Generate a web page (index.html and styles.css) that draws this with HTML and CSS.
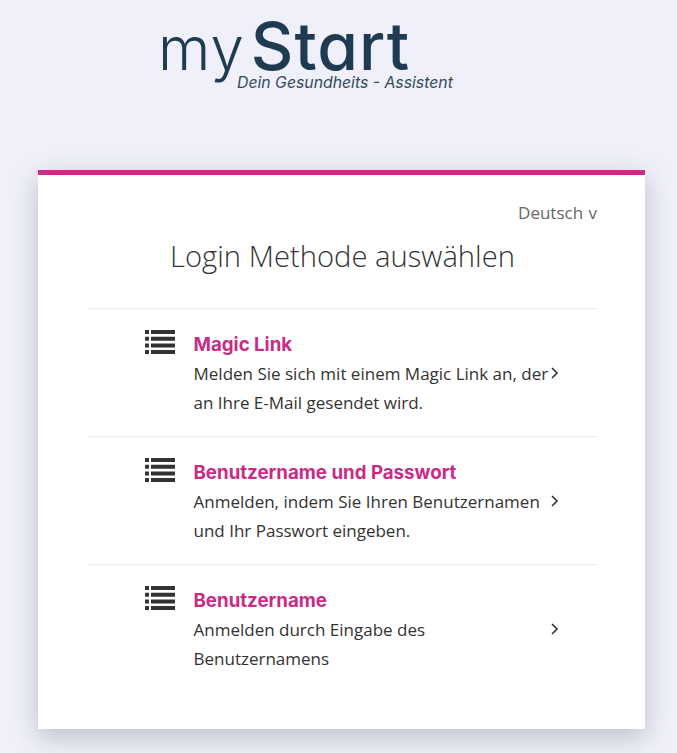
FILE: index.html
```html
<!DOCTYPE html>
<html lang="en">
<head>
    <meta charset="UTF-8">
    <meta name="viewport" content="width=device-width, initial-scale=1.0">
    <title>Login Methode auswählen</title>
    <link rel="stylesheet" href="styles.css">
</head>
<body>
    <header class="logo">
        <div class="logo-word"><span class="logo-my">my</span><span class="logo-start">Start</span></div>
        <div class="logo-tag">Dein Gesundheits - Assistent</div>
    </header>

    <main class="card">
        <div class="lang">Deutsch <span class="lang-arrow">v</span></div>
        <h1>Login Methode auswählen</h1>

        <ul class="methods">
            <li class="method">
                <svg class="method-icon" viewBox="0 0 30 24" width="30" height="24"><path d="M0 0h4v4H0zM6 0h24v4H6zM0 6.700h4v4H0zM6 6.700h24v4H6zM0 13.400h4v4H0zM6 13.400h24v4H6zM0 20h4v4H0zM6 20h24v4H6z"/></svg>
                <div class="method-text">
                    <h2>Magic Link</h2>
                    <p>Melden Sie sich mit einem Magic Link an, der an Ihre E-Mail gesendet wird.</p>
                </div>
                <svg class="chevron" viewBox="0 0 8 12" width="8" height="12"><path d="M1 1l5 5-5 5"/></svg>
            </li>
            <li class="method">
                <svg class="method-icon" viewBox="0 0 30 24" width="30" height="24"><path d="M0 0h4v4H0zM6 0h24v4H6zM0 6.700h4v4H0zM6 6.700h24v4H6zM0 13.400h4v4H0zM6 13.400h24v4H6zM0 20h4v4H0zM6 20h24v4H6z"/></svg>
                <div class="method-text">
                    <h2>Benutzername und Passwort</h2>
                    <p>Anmelden, indem Sie Ihren Benutzernamen und Ihr Passwort eingeben.</p>
                </div>
                <svg class="chevron" viewBox="0 0 8 12" width="8" height="12"><path d="M1 1l5 5-5 5"/></svg>
            </li>
            <li class="method">
                <svg class="method-icon" viewBox="0 0 30 24" width="30" height="24"><path d="M0 0h4v4H0zM6 0h24v4H6zM0 6.700h4v4H0zM6 6.700h24v4H6zM0 13.400h4v4H0zM6 13.400h24v4H6zM0 20h4v4H0zM6 20h24v4H6z"/></svg>
                <div class="method-text">
                    <h2>Benutzername</h2>
                    <p>Anmelden durch Eingabe des Benutzernamens</p>
                </div>
                <svg class="chevron" viewBox="0 0 8 12" width="8" height="12"><path d="M1 1l5 5-5 5"/></svg>
            </li>
        </ul>
    </main>
</body>
</html>
```

FILE: styles.css
```css
body {
    margin: 0;
    height: 753px;
    overflow: hidden;
    background-color: #eff0f9;
    font-family: "Open Sans", sans-serif;
    color: #333;
}

.logo {
    height: 170px;
    padding-left: 158px;
    box-sizing: border-box;
    color: #1f3b51;
}

.logo-word {
    display: flex;
    align-items: baseline;
    height: 72px;
    line-height: 92px;
    font-family: Inter, sans-serif;
}

.logo-my {
    font-size: 60px;
    font-weight: 300;
    letter-spacing: 1px;
}

.logo-start {
    font-size: 66px;
    font-weight: 500;
    font-feature-settings: "cv11";
    letter-spacing: 1px;
    margin-left: 6px;
}

.logo-tag {
    margin-left: 79px;
    font-family: Inter, sans-serif;
    font-size: 15.800px;
    font-style: italic;
    line-height: 22px;
    color: #34495e;
}

.card {
    width: 607px;
    height: 559px;
    margin-left: 38px;
    box-sizing: border-box;
    border-top: 5px solid #c72c87;
    padding: 27px 48px 0 50px;
    background-color: #fff;
    box-shadow: 0 8px 24px rgba(60, 64, 80, 0.28);
}

.lang {
    text-align: right;
    font-size: 17px;
    line-height: 22px;
    color: #666;
}

.lang-arrow {
    font-size: 17px;
    margin-left: 1px;
}

h1 {
    margin: 13px 0 33px;
    text-align: center;
    font-size: 29.200px;
    font-weight: 300;
    line-height: 38px;
    color: #333;
}

.methods {
    list-style: none;
    margin: 0;
    padding: 0;
}

.method {
    display: flex;
    align-items: flex-start;
    height: 128px;
    box-sizing: border-box;
    border-top: 1px solid #eee;
    padding-left: 57px;
    padding-top: 21px;
}

.method-icon {
    flex: none;
    fill: #333;
}

.method-text {
    width: 357.500px;
    margin-left: 18.500px;
}

h2 {
    margin: 2px 0 0;
    font-family: Inter, sans-serif;
    font-size: 18.700px;
    font-weight: 700;
    line-height: 26px;
    color: #c72c87;
}

p {
    margin: 1px 0 0;
    font-size: 17px;
    line-height: 29px;
    color: #333;
}

.chevron {
    flex: none;
    margin-top: 37px;
    fill: none;
    stroke: #333;
    stroke-width: 1.600;
}
```
